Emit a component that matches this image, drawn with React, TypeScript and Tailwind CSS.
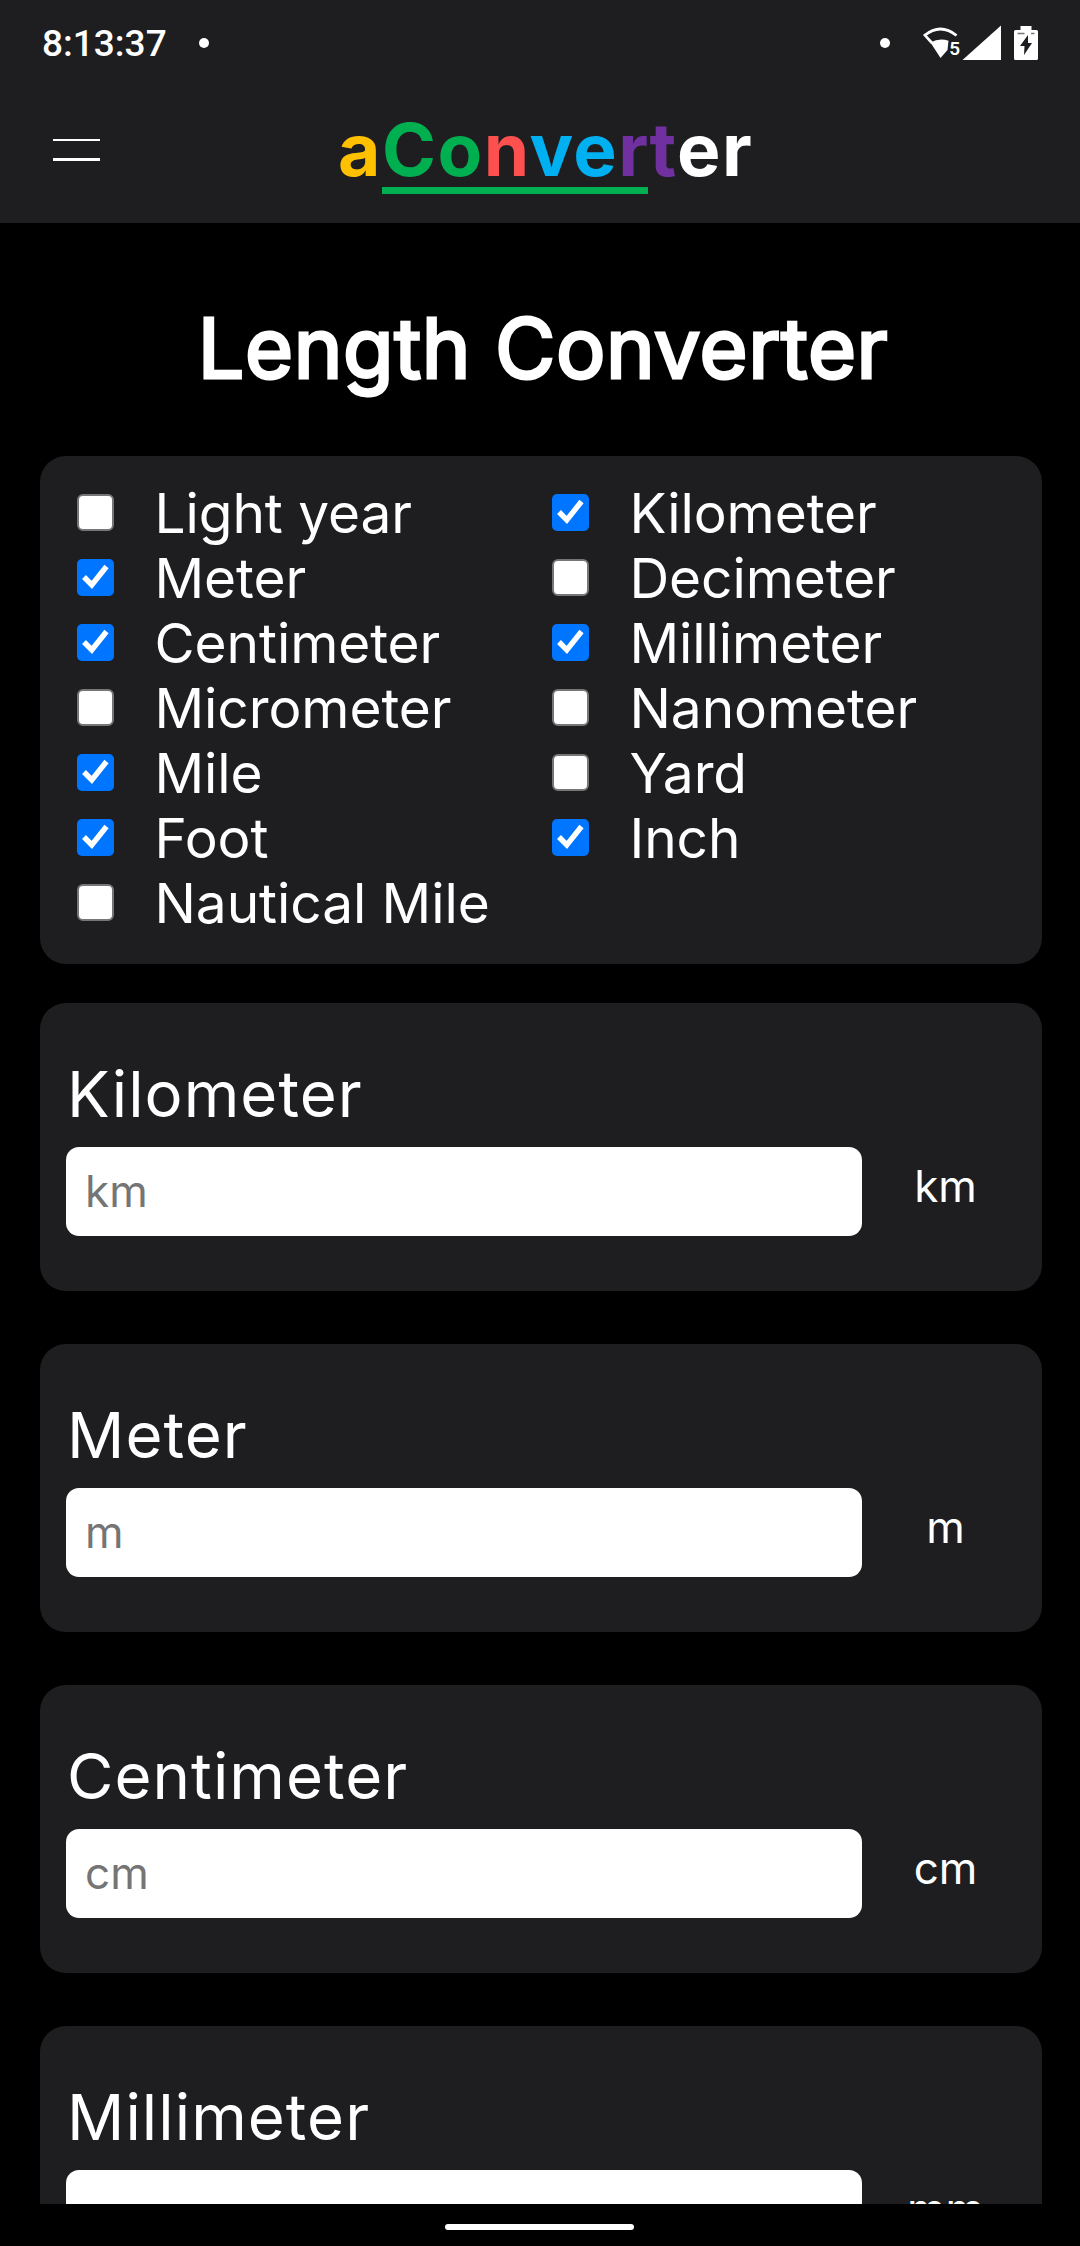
const UNITS: { name: string; on: boolean }[] = [
  { name: "Light year", on: false },
  { name: "Kilometer", on: true },
  { name: "Meter", on: true },
  { name: "Decimeter", on: false },
  { name: "Centimeter", on: true },
  { name: "Millimeter", on: true },
  { name: "Micrometer", on: false },
  { name: "Nanometer", on: false },
  { name: "Mile", on: true },
  { name: "Yard", on: false },
  { name: "Foot", on: true },
  { name: "Inch", on: true },
  { name: "Nautical Mile", on: false },
];

const FIELDS = [
  { name: "Kilometer", unit: "km" },
  { name: "Meter", unit: "m" },
  { name: "Centimeter", unit: "cm" },
  { name: "Millimeter", unit: "mm" },
];

function StatusBar() {
  return (
    <div className="flex h-[86px] items-center justify-between pl-[42px] pr-[42px] text-white">
      <div className="flex items-center">
        <span className="w-[157px] pt-[2px] font-['Roboto',sans-serif] text-[37px] leading-[44px] font-medium">8:13:37</span>
        <span className="size-[10px] rounded-full bg-white" />
      </div>
      <div className="flex items-center">
        <span className="mr-[33px] size-[10px] rounded-full bg-white" />
        {/* wifi, cell signal and charging battery */}
        <svg width="115" height="36" viewBox="923 25 115 36" fill="#fff">
          <path d="M924.500 35.500 Q940.500 22.500 956.500 35.500" fill="none" stroke="#fff" strokeWidth="2.800" />
          <path d="M923 35 L925 33.500 L933 42 L931 44 Z" />
          <path d="M930.500 42.500 Q939.500 37.500 948.500 40.800 L947.500 50 L940.500 58 Z" />
          <text x="949.300" y="54.500" fontFamily="Roboto, sans-serif" fontSize="19" fontWeight="600">5</text>
          <path d="M962.500 60 L1001 25.500 V60 Z" />
          <path d="M1020.500 26 H1031.500 V30 H1036.500 Q1038 30 1038 31.500 V58.500 Q1038 60 1036.500 60 H1015.500 Q1014 60 1014 58.500 V31.500 Q1014 30 1015.500 30 H1020.500 Z" />
          <path d="M1017.500 33.500 H1024.500 M1031 33.500 H1034.500" stroke="#777" strokeWidth="1.500" />
          <path d="M1028 35 L1020 46 H1024.500 L1024 55 L1032 43 H1028 Z" fill="#1e1e20" />
        </svg>
      </div>
    </div>
  );
}

function Logo() {
  return (
    <div className="font-['Inter',sans-serif] text-[73px] leading-[88px] font-bold tracking-[1.5px] whitespace-nowrap text-white">
      <span className="text-[#ffc000]">a</span>
      <span className="relative inline-block">
        <span className="text-[#00b050]">Co</span>
        <span className="text-[#ff5050]">n</span>
        <span className="text-[#00b0f0]">ve</span>
        <span className="text-[#7030a0]">r</span>
        <span className="absolute top-[81px] right-[2px] left-0 h-[7px] bg-[#00b050]" />
      </span>
      <span className="text-[#7030a0]">t</span>er
    </div>
  );
}

function Checkbox({ on }: { on: boolean }) {
  if (!on) return <span className="size-[37px] rounded-[6px] border-[2.500px] border-[#767676] bg-white" />;
  return (
    <svg className="size-[37px] rounded-[5px] bg-[#0075ff]" viewBox="0 0 37 37" fill="none">
      <path d="M7 18 L14.800 26 L29.500 7.500" stroke="#fff" strokeWidth="5.400" />
    </svg>
  );
}

export default function App() {
  return (
    <div className="flex h-[2246px] w-[1080px] flex-col overflow-hidden bg-black font-['Inter',sans-serif] text-white">
      <header className="h-[223px] shrink-0 bg-[#1e1e20]">
        <StatusBar />
        <div className="flex pt-[20px] pl-[53px]">
          <div className="mt-[33px] mr-[238px] flex w-[47px] flex-col gap-[17px]">
            <span className="h-[2px] bg-white" />
            <span className="h-[3px] bg-white" />
          </div>
          <Logo />
        </div>
      </header>

      <main className="h-[1981px] shrink-0 overflow-hidden pr-[38px] pl-[40px]">
        <h1 className="mt-[75px] mb-[58px] pl-[4px] text-center text-[82.5px] leading-[100px] tracking-[0.6px] [-webkit-text-stroke:3px_white]">
          Length Converter
        </h1>

        <section className="grid h-[508px] grid-cols-[475px_1fr] content-start rounded-[26px] bg-[#1e1e20] pt-[25px] pl-[37px]">
          {UNITS.map((u) => (
            <label key={u.name} className="flex h-[65px] items-start text-[55px] leading-[65px] tracking-[-0.08px]">
              <span className="mt-[13px] mr-[40.500px] flex">
                <Checkbox on={u.on} />
              </span>
              {u.name}
            </label>
          ))}
        </section>

        <div className="mt-[39px] flex flex-col gap-[53px]">
          {FIELDS.map((f) => (
            <section key={f.name} className="h-[288px] rounded-[26px] bg-[#1e1e20] pt-[52px] pl-[26px]">
              <h2 className="mb-[15px] pl-[1px] text-[63.500px] leading-[77px] tracking-[1.05px]">{f.name}</h2>
              <div className="flex">
                <input
                  placeholder={f.unit}
                  className="h-[89px] w-[796px] rounded-[13px] bg-white pb-[2px] pl-[19px] text-[44px] text-black placeholder:text-[#757575]"
                />
                <span className="w-[167px] pt-[12px] text-center text-[44px] leading-[54px]">{f.unit}</span>
              </div>
            </section>
          ))}
        </div>
      </main>

      <footer className="flex h-[42px] shrink-0 justify-center pt-[20px] pr-[1px]">
        <span className="h-[6px] w-[189px] rounded-full bg-white" />
      </footer>
    </div>
  );
}
